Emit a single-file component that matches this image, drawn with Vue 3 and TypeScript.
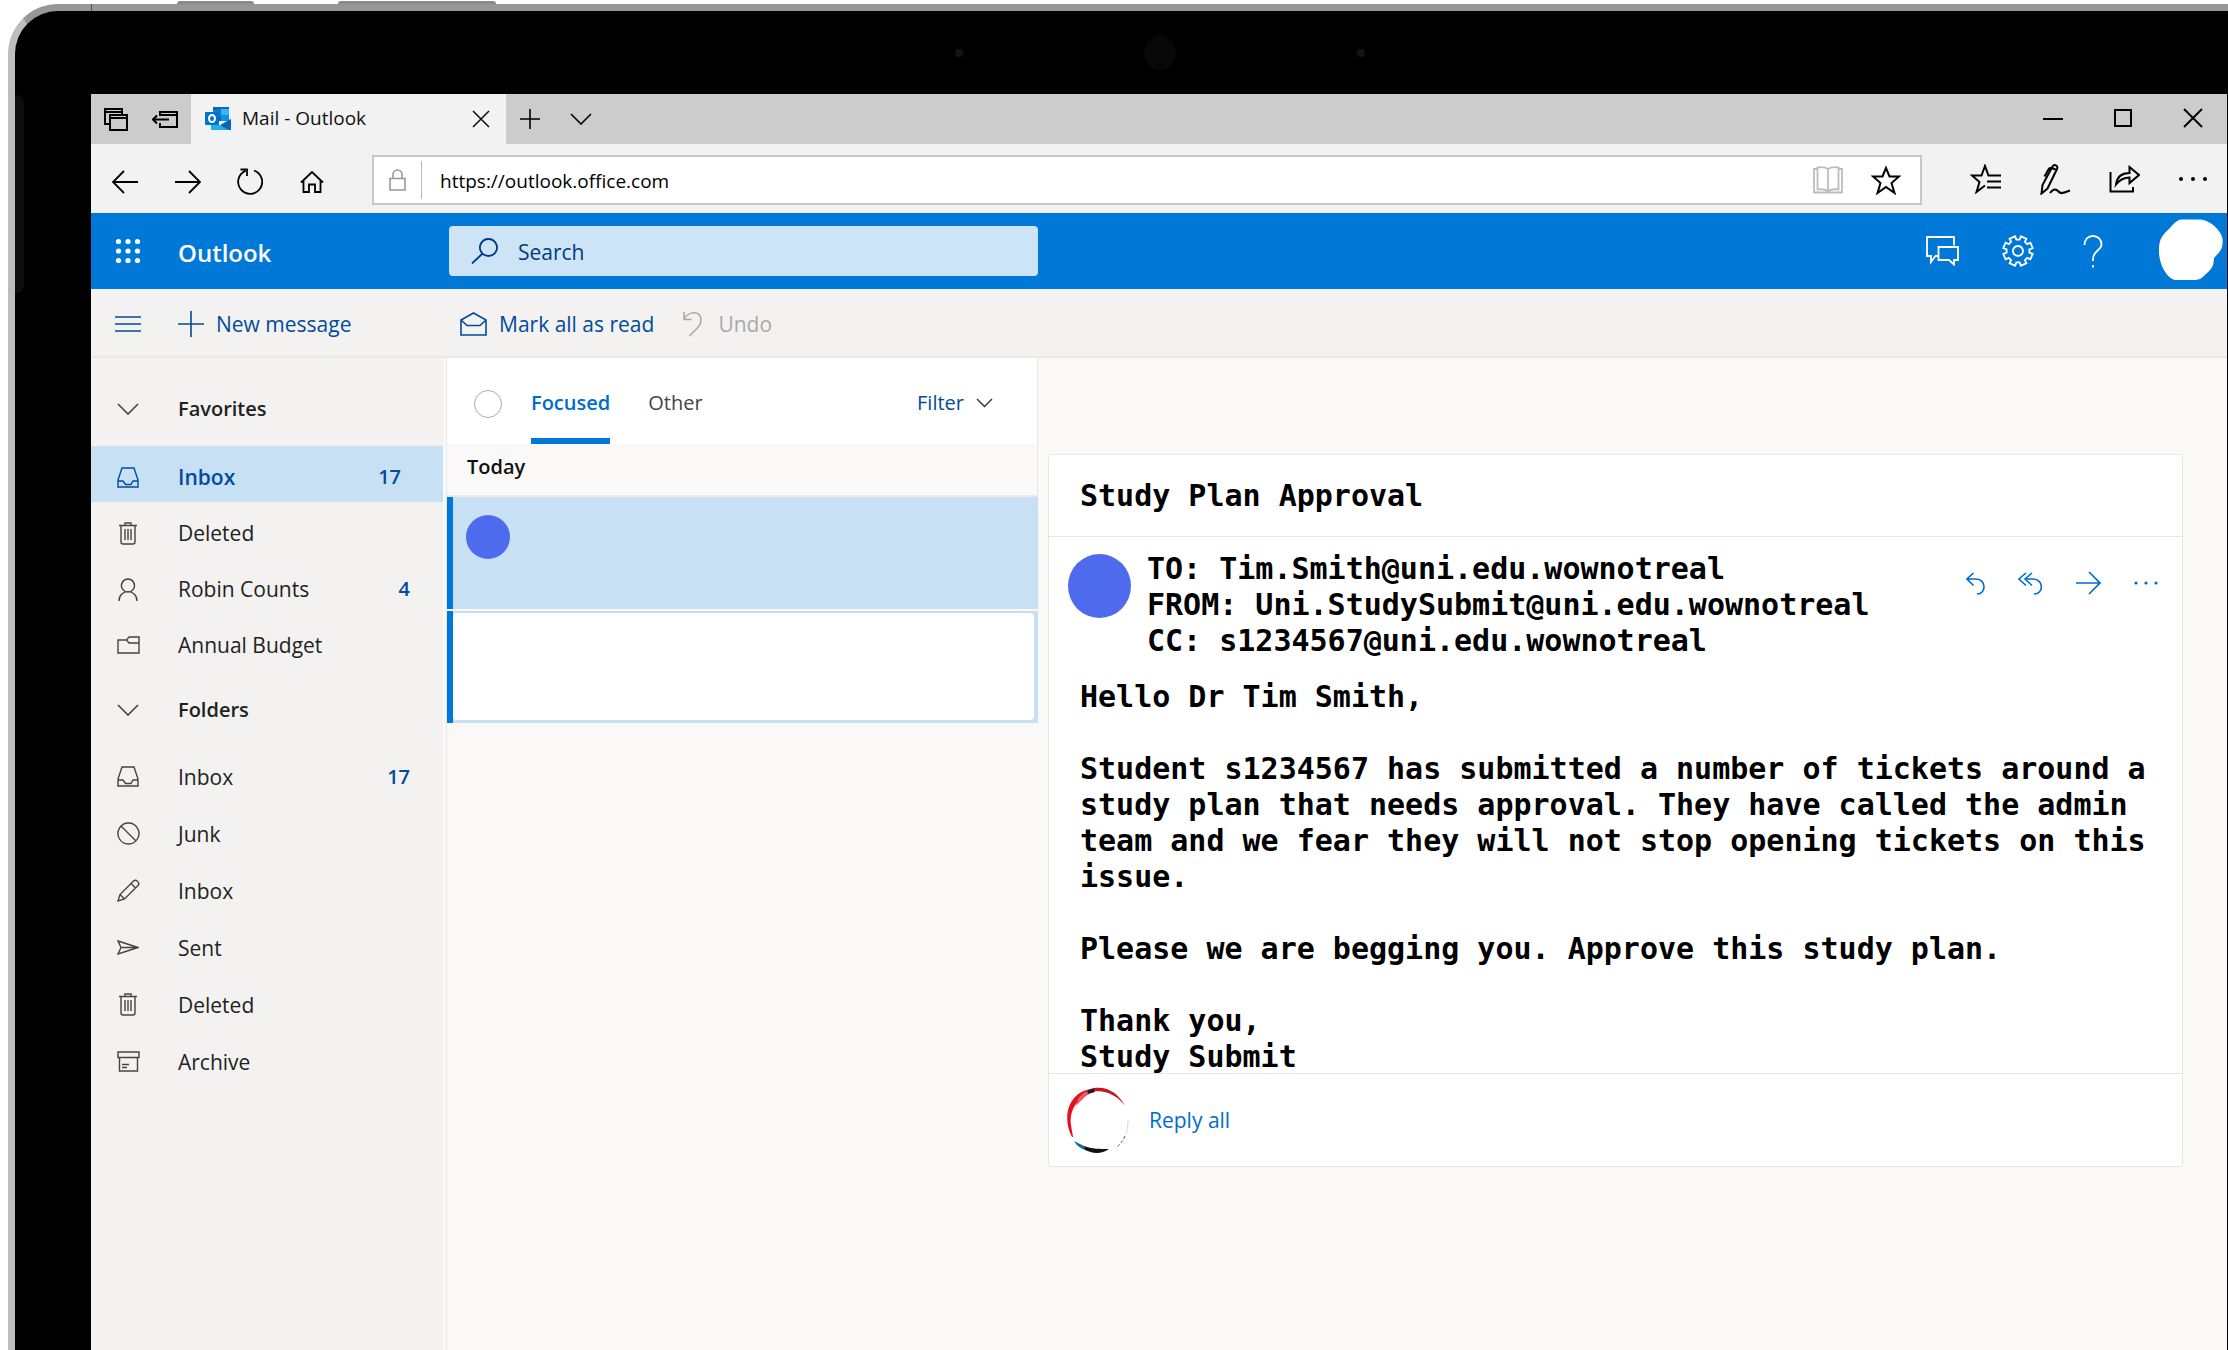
<script setup lang="ts">
import { h, ref } from 'vue'

interface Glyph { w: number; h: number; d: string; s?: number }

function gearPath(teeth: number, c: number, outer: number, inner: number): string {
  const pts: string[] = []
  for (let i = 0; i < teeth; i++) {
    const a = (i / teeth) * Math.PI * 2 + Math.PI / teeth
    const steps: [number, number][] = [[-0.25, inner], [-0.2, outer], [0.2, outer], [0.25, inner]]
    for (const [da, r] of steps) {
      pts.push(`${(c + Math.cos(a + da) * r).toFixed(1)} ${(c + Math.sin(a + da) * r).toFixed(1)}`)
    }
  }
  return `M${pts.join('L')}ZM${c} ${c - 5}a5 5 0 1 1 -.1 0Z`
}

const glyphs: Record<string, Glyph> = {
  tabs: { w: 24, h: 23, s: 2, d: 'M5 16H1V1H18V6M1 4H18M6 7H23V22H6ZM6 10H23' },
  aside: { w: 26, h: 17, s: 2, d: 'M8 5V1H25V16H8V12M8 4H25M1 8.500H17M5 4.500L1 8.500L5 12.500' },
  close: { w: 18, h: 18, s: 1.6, d: 'M1 1L17 17M17 1L1 17' },
  plus: { w: 20, h: 20, s: 1.6, d: 'M10 0V20M0 10H20' },
  chevron: { w: 22, h: 12, s: 1.6, d: 'M1 1L11 11L21 1' },
  chevronSmall: { w: 17, h: 10, s: 1.4, d: 'M1 1L8.500 8.500L16 1' },
  minimise: { w: 20, h: 20, s: 2, d: 'M0 11H20' },
  maximise: { w: 18, h: 18, s: 2, d: 'M1 1H17V17H1Z' },
  quit: { w: 20, h: 20, s: 2, d: 'M1 1L19 19M19 1L1 19' },
  back: { w: 26, h: 24, s: 1.8, d: 'M1 12H26M12 1L1 12L12 23' },
  forward: { w: 26, h: 24, s: 1.8, d: 'M0 12H25M14 1L25 12L14 23' },
  refresh: { w: 26, h: 27, s: 1.8, d: 'M17 2.500A12 12 0 1 1 8.500 2.800M3.500 1.500H10V8' },
  home: { w: 24, h: 22, s: 1.8, d: 'M1 11.500L12 1L23 11.500M3.500 9.500V21H9V13.500H15V21H20.500V9.500' },
  lock: { w: 17, h: 22, s: 1.6, d: 'M1 9.500H16V21H1ZM4 9.500V5.500A4.500 4.500 0 0 1 13 5.500V9.500' },
  book: { w: 30, h: 28, s: 1.8, d: 'M4.500 3H1V26.500H29V3H25.500M15 3C12 .8 8 1 4.500 1.500V23.500C8 23 12 23 15 25C18 23 22 23 25.500 23.500V1.500C22 1 18 .8 15 3V25' },
  star: { w: 30, h: 30, s: 2, d: 'M15 3L18.500 11.500H28L20.500 18L23.500 28L15 22L6.500 28L9.500 18L2 11.500H11.500Z' },
  favourites: { w: 31, h: 30, s: 2, d: 'M31 11.500H18.500L15 2L11.500 11.500H2L9.500 18L6.500 28L15 21.500M17 17.500H31M17 23.500H31' },
  ink: { w: 31, h: 32, s: 2, d: 'M1.500 30.500L2.500 22L12.500 3.500C14 .5 18.500 2.500 17 6L7.500 25.500ZM12 5L16.500 7M4.500 13.500L9 5.500L12 4.500M10 30C13 25.500 16 25.500 18.500 28.500C21.500 32 25 29 30 27.500' },
  share: { w: 31, h: 28, s: 2, d: 'M1.500 7V26.500H24V22M7 19.500C8 12 13 8 20.500 8V2L30 10L20.500 18V12.500C15 12.500 11 14.500 7 19.500Z' },
  chat: { w: 33, h: 30, s: 1.8, d: 'M12 20H9.500L5 26V20H1V1H28V9.500M12.500 11H32V24H28V28.500L23 24H12.500Z' },
  gear: { w: 32, h: 32, s: 1.8, d: gearPath(8, 16, 15, 11.500) },
  help: { w: 20, h: 33, s: 1.8, d: 'M1.500 10C1.500 4.500 5 1 10 1S18.500 4.500 18.500 9.500C18.500 15 10 16 10 24V26M10 30V32.500' },
  search: { w: 27, h: 26, s: 1.8, d: 'M17.500 1A8.500 8.500 0 1 1 17.400 1ZM11.500 15.500L1 25.500' },
  menu: { w: 26, h: 16, s: 1.4, d: 'M0 1H26M0 8H26M0 15H26' },
  add: { w: 26, h: 26, s: 1.6, d: 'M13 0V26M0 13H26' },
  envelope: { w: 27, h: 24, s: 1.6, d: 'M1 8L13.500 1L26 8V23H1ZM1 8L7 13.500H20L26 8' },
  undo: { w: 20, h: 26, s: 1.6, d: 'M1 1V8.500H8.500M1 8.500C4 1 18 -2 18 9C18 15 13 18 6.500 25' },
  inbox: { w: 22, h: 21, s: 1.4, d: 'M1 20V13L5 1H17L21 13V20ZM1 14H6L8.500 17.500H14L16 14H21' },
  trash: { w: 18, h: 23, s: 1.4, d: 'M0 3.500H18M6 3.500V1H12V3.500M2 3.500V20Q2 22 4 22H14Q16 22 16 20V3.500M6 7V18M9 7V18M12 7V18' },
  person: { w: 20, h: 23, s: 1.4, d: 'M10 1A6.500 6.500 0 1 1 9.900 1ZM1 23C1 10.500 19 10.500 19 23' },
  folder: { w: 23, h: 18, s: 1.4, d: 'M1 4H9.500L12 1H22V17H1ZM9.500 4L12 7H22' },
  junk: { w: 23, h: 23, s: 1.4, d: 'M11.500 1A10.500 10.500 0 1 1 11.400 1ZM4 4L19 19' },
  pencil: { w: 23, h: 23, s: 1.4, d: 'M1 22L3 15.500L16.500 2C19 -.5 23.500 4 21 6.500L7.500 20ZM14 4.500L18.500 9M3 15.500L7.500 20' },
  sent: { w: 22, h: 15, s: 1.4, d: 'M1 1L21 7.500L1 14L4 7.500ZM4 7.500H21' },
  archive: { w: 23, h: 21, s: 1.4, d: 'M1 1H22V6.500H1ZM2.500 6.500V20H20.500V6.500M5 13.500H12M5 16.500H10' },
  reply: { w: 19, h: 23, s: 1.6, d: 'M7.500 1L1 7L7.500 13.500M1 7H10C20.500 7 20.500 22 11 22' },
  replyAll: { w: 25, h: 23, s: 1.6, d: 'M8 1L1 7L8 13.500M14 1L7 7L14 13.500M7 7H15C26 7 26 22 16 22' },
  send: { w: 25, h: 24, s: 1.6, d: 'M0 12H24M13 1L24 12L13 23' },
}

const Icon = (props: { name: string }) => {
  const g = glyphs[props.name]
  return h('svg', {
    width: g.w, height: g.h, viewBox: `0 0 ${g.w} ${g.h}`, fill: 'none',
    stroke: 'currentColor', 'stroke-width': g.s ?? 1.5, 'aria-hidden': 'true',
  }, [h('path', { d: g.d })])
}
Icon.props = ['name']

const url = ref('https://outlook.office.com')
const query = ref('')

const favorites = [
  { icon: 'inbox', label: 'Inbox', count: 17, active: true },
  { icon: 'trash', label: 'Deleted' },
  { icon: 'person', label: 'Robin Counts', count: 4 },
  { icon: 'folder', label: 'Annual Budget' },
]
const folders = [
  { icon: 'inbox', label: 'Inbox', count: 17 },
  { icon: 'junk', label: 'Junk' },
  { icon: 'pencil', label: 'Inbox' },
  { icon: 'sent', label: 'Sent' },
  { icon: 'trash', label: 'Deleted' },
  { icon: 'archive', label: 'Archive' },
]
const recipients = [
  'TO: Tim.Smith@uni.edu.wownotreal',
  'FROM: Uni.StudySubmit@uni.edu.wownotreal',
  'CC: s1234567@uni.edu.wownotreal',
]
</script>

<template>
  <div class="stage">
    <div class="side-button power"></div>
    <div class="side-button volume"></div>
    <div class="device">
      <div class="seam"></div>
      <div class="grip"></div>
      <div class="bezel">
        <span class="sensor"></span><span class="lens"></span><span class="sensor"></span>
      </div>

      <div class="screen">
        <div class="tabstrip">
          <div class="tab-tools">
            <button aria-label="Tabs you've set aside"><Icon name="tabs" /></button>
            <button aria-label="Set these tabs aside"><Icon name="aside" /></button>
          </div>
          <div class="tab">
            <svg class="logo" width="26" height="24" viewBox="0 0 26 24" aria-hidden="true">
              <rect x="8" y="0" width="16" height="14" fill="#1066b5" />
              <rect x="8" y="3" width="8" height="7" fill="#0a7bd8" />
              <rect x="16" y="2" width="8" height="6" fill="#35b8f1" />
              <rect x="16" y="8" width="8" height="6" fill="#1490df" />
              <path d="M6 12L16 19L26 12V23H6Z" fill="#1a9ae8" />
              <path d="M26 12L15 18L24 23H26Z" fill="#0c62b3" />
              <path d="M6 14L22 23H6Z" fill="#22b0f0" />
              <rect x="0" y="5" width="14" height="13" rx="1" fill="#0072cf" />
              <ellipse cx="7" cy="11.500" rx="3" ry="3.500" fill="none" stroke="#fff" stroke-width="2" />
            </svg>
            <span class="tab-title">Mail - Outlook</span>
            <button aria-label="Close tab"><Icon name="close" /></button>
          </div>
          <div class="tab-extra">
            <button aria-label="New tab"><Icon name="plus" /></button>
            <button aria-label="Tab previews"><Icon name="chevron" /></button>
          </div>
          <div class="window-tools">
            <button aria-label="Minimise"><Icon name="minimise" /></button>
            <button aria-label="Maximise"><Icon name="maximise" /></button>
            <button aria-label="Close"><Icon name="quit" /></button>
          </div>
        </div>

        <div class="navbar">
          <div class="nav-left">
            <button aria-label="Back"><Icon name="back" /></button>
            <button aria-label="Forward"><Icon name="forward" /></button>
            <button aria-label="Refresh"><Icon name="refresh" /></button>
            <button aria-label="Home"><Icon name="home" /></button>
          </div>
          <div class="address">
            <span class="lock"><Icon name="lock" /></span>
            <input v-model="url" aria-label="Address" type="text" />
            <button class="muted" aria-label="Reading view"><Icon name="book" /></button>
            <button aria-label="Add to favourites"><Icon name="star" /></button>
          </div>
          <div class="nav-right">
            <button aria-label="Favourites"><Icon name="favourites" /></button>
            <button aria-label="Add notes"><Icon name="ink" /></button>
            <button aria-label="Share"><Icon name="share" /></button>
            <button aria-label="More">
              <svg width="28" height="4" viewBox="0 0 28 4"><circle cx="2" cy="2" r="2" /><circle cx="14" cy="2" r="2" /><circle cx="26" cy="2" r="2" /></svg>
            </button>
          </div>
        </div>

        <header class="appbar">
          <div class="brand">
            <button class="lead" aria-label="App launcher">
              <svg width="26" height="26" viewBox="0 0 26 26" fill="currentColor">
                <template v-for="r in 3" :key="r">
                  <circle v-for="c in 3" :key="c" :cx="c * 9.500 - 6" :cy="r * 9.500 - 6" r="2.600" />
                </template>
              </svg>
            </button>
            <a href="#">Outlook</a>
          </div>
          <label class="search">
            <Icon name="search" />
            <input v-model="query" type="text" placeholder="Search" aria-label="Search" />
          </label>
          <div class="app-tools">
            <button aria-label="Chat"><Icon name="chat" /></button>
            <button aria-label="Settings"><Icon name="gear" /></button>
            <button aria-label="Help"><Icon name="help" /></button>
            <button class="profile" aria-label="Account">
              <svg width="64" height="62" viewBox="0 0 64 62"><path fill="#fff" d="M22 .5H42C53 2 63 13 63.500 20C64.500 31 60 33 55 39C54.500 45 54 48 51 51C45 57 42 61 36 61H16C7 59 0 44 0 33C0 22 1 18 10 10C14 5 18 1 22 .5Z" /></svg>
            </button>
          </div>
        </header>

        <div class="toolbar">
          <div class="toolbar-left">
            <button class="lead" aria-label="Toggle folders"><Icon name="menu" /></button>
            <button class="new"><Icon name="add" />New message</button>
          </div>
          <button class="mark"><Icon name="envelope" />Mark all as read</button>
          <button class="undo" disabled><Icon name="undo" />Undo</button>
        </div>

        <div class="columns">
          <nav class="sidebar">
            <button class="group"><span class="lead"><Icon name="chevron" /></span>Favorites</button>
            <a v-for="f in favorites" :key="f.label" href="#" class="folder" :class="{ active: f.active }">
              <span class="lead"><Icon :name="f.icon" /></span>{{ f.label }}
              <span v-if="f.count" class="count">{{ f.count }}</span>
            </a>
            <button class="group second"><span class="lead"><Icon name="chevron" /></span>Folders</button>
            <a v-for="(f, i) in folders" :key="i" href="#" class="folder tall">
              <span class="lead"><Icon :name="f.icon" /></span>{{ f.label }}
              <span v-if="f.count" class="count">{{ f.count }}</span>
            </a>
          </nav>

          <section class="list">
            <div class="list-head">
              <input type="checkbox" aria-label="Select all messages" />
              <button class="pivot selected">Focused</button>
              <button class="pivot">Other</button>
              <button class="filter">Filter<Icon name="chevronSmall" /></button>
            </div>
            <h2>Today</h2>
            <a href="#" class="mail open" aria-label="Study Plan Approval"><span class="avatar"></span></a>
            <a href="#" class="mail blank" aria-label="Message"><span></span></a>
          </section>

          <main class="reading">
            <article class="card">
              <h1>Study Plan Approval</h1>
              <div class="message">
                <div class="meta">
                  <span class="avatar big"></span>
                  <div class="recipients">
                    <div v-for="r in recipients" :key="r">{{ r }}</div>
                  </div>
                  <div class="actions">
                    <button aria-label="Reply"><Icon name="reply" /></button>
                    <button aria-label="Reply all"><Icon name="replyAll" /></button>
                    <button aria-label="Forward"><Icon name="send" /></button>
                    <button aria-label="More actions">
                      <svg width="24" height="4" viewBox="0 0 24 4" fill="currentColor"><circle cx="2" cy="2" r="1.600" /><circle cx="12" cy="2" r="1.600" /><circle cx="22" cy="2" r="1.600" /></svg>
                    </button>
                  </div>
                </div>
                <div class="body">
                  <p>Hello Dr Tim Smith,</p>
                  <p>Student s1234567 has submitted a number of tickets around a study plan that needs approval. They have called the admin team and we fear they will not stop opening tickets on this issue.</p>
                  <p>Please we are begging you. Approve this study plan.</p>
                  <p>Thank you,<br />Study Submit</p>
                </div>
              </div>
              <div class="reply-bar">
                <svg width="64" height="66" viewBox="0 0 64 66" aria-hidden="true">
                  <path d="M6 50C-3 33 0 10 20 3L24 5C10 13 3 24 5 38L7 50Z" fill="#e3121c" />
                  <path d="M12 12C15 7 20 4 24 3L23 7C18 10 14 15 10 19Z" fill="#ea5a66" />
                  <path d="M21 3L28 1L29 5L22 7Z" fill="#3a1116" />
                  <path d="M28 1C42 -1 53 7 59 19C52 10 44 4 28 4Z" fill="#c4141c" />
                  <path d="M62 33C62 40 61 44 60 47" fill="none" stroke="#f6cdca" stroke-width="1" />
                  <path d="M59 49C57 54 55 56 50 61" fill="none" stroke="#555" stroke-width="1" stroke-dasharray="3 2" />
                  <path d="M8 54C11 59 15 62 20 63L18 59Z" fill="#0b6bb0" />
                  <path d="M18 59C26 62 34 62 43 62C35 68 25 66 19 63Z" fill="#111" />
                </svg>
                <button>Reply all</button>
              </div>
            </article>
          </main>
        </div>
      </div>
    </div>
  </div>
</template>

<style>
html, body { margin: 0; background: #fff; }
</style>

<style scoped>
* { box-sizing: border-box; }
.stage {
  position: relative;
  height: 100vh;
  min-height: 1200px;
  padding: 4px 0 0 8px;
  overflow: hidden;
  font-family: "Open Sans", "Noto Sans", sans-serif;
  font-size: 21px;
  line-height: 28px;
  color: #222;
}
button {
  display: flex;
  align-items: center;
  justify-content: center;
  padding: 0;
  border: 0;
  background: none;
  color: inherit;
  font: inherit;
}
a { color: inherit; text-decoration: none; }
input { border: 0; background: none; outline: 0; font: inherit; color: inherit; padding: 0; }
svg { display: block; flex: none; }

.side-button { position: absolute; top: 1px; height: 4px; background: #8a8a8a; border-radius: 3px 3px 0 0; }
.power { left: 177px; width: 77px; }
.volume { left: 338px; width: 158px; }
.device {
  position: relative;
  display: flex;
  flex-direction: column;
  height: 100%;
  border-left: 7px solid #bdbdbd;
  border-top: 7px solid #979797;
  border-top-left-radius: 50px;
  background: #000;
}
.seam { position: absolute; top: -7px; left: 76px; width: 1px; height: 7px; background: #555; }
.grip { position: absolute; top: 84px; left: 0; width: 9px; height: 198px; background: #0e0e0e; border-radius: 0 8px 8px 0; }
.bezel { display: flex; align-items: center; justify-content: center; gap: 181px; height: 83px; flex: none; padding-left: 77px; }
.sensor { width: 8px; height: 8px; border-radius: 50%; background: #141414; }
.lens { width: 32px; height: 34px; border-radius: 50%; background: #080808; }

.screen { flex: 1; display: flex; flex-direction: column; margin: 0 1px 0 76px; background: #faf9f8; }

.tabstrip { display: flex; height: 50px; flex: none; background: #ccc; color: #000; }
.tab-tools { display: flex; align-items: center; gap: 24px; width: 100px; padding-left: 13px; }
.tab { display: flex; align-items: center; width: 315px; padding: 0 16px 0 14px; background: #f2f2f2; font-size: 19px; color: #111; }
.tab-title { flex: 1; margin-left: 11px; padding-bottom: 2px; }
.tab-extra { display: flex; align-items: center; gap: 30px; padding-left: 14px; }
.window-tools { display: flex; align-items: center; gap: 51px; margin-left: auto; padding: 0 24px 2px 0; }

.navbar { display: flex; align-items: center; height: 69px; flex: none; background: #f2f2f2; color: #000; }
.nav-left { display: flex; align-items: center; justify-content: space-between; width: 212px; margin: 6px 48px 0 21px; }
.address { display: flex; align-items: center; flex: 1; height: 50px; margin-top: 2px; padding-right: 19px; gap: 28px; border: 2px solid #c8c8c8; background: #fff; }
.lock { display: flex; align-items: center; justify-content: center; width: 48px; height: 38px; border-right: 1px solid #bbb; color: #999; }
.address input { flex: 1; margin-left: -10px; padding-top: 2px; font-size: 19px; }
.muted { color: #bdbdbd; }
.nav-right { display: flex; align-items: center; justify-content: space-between; width: 237px; margin: 0 20px 0 48px; }

.appbar { display: flex; align-items: center; height: 76px; flex: none; background: #0078d7; color: #fff; }
.lead { display: flex; align-items: center; justify-content: center; width: 26px; margin: 0 37px 0 24px; }
.brand { display: flex; align-items: center; width: 358px; font-size: 24px; font-weight: 600; }
.brand a { padding-top: 4px; }
.search { display: flex; align-items: center; gap: 20px; flex: 0 1 589px; height: 50px; padding-left: 22px; border-radius: 4px; background: #cde4f7; color: #003a80; }
.search input { flex: 1; padding-top: 2px; }
.search input::placeholder { color: inherit; opacity: 1; }
.app-tools { display: flex; align-items: center; margin-left: auto; padding-right: 4px; }
.app-tools button + button { margin-left: 43px; }
.app-tools button:nth-child(3) { margin-left: 49px; }
.app-tools .profile { margin-left: 56px; padding-bottom: 3px; }

.toolbar { display: flex; align-items: center; height: 69px; flex: none; padding-top: 3px; border-bottom: 2px solid #eae9e8; background: #f3f2f1; color: #004b9b; }
.toolbar-left { display: flex; align-items: center; width: 369px; }
.new { gap: 12px; }
.mark { gap: 12px; }
.undo { gap: 15px; margin-left: 29px; color: #a9a9a9; }

.columns { display: flex; flex: 1; }
.sidebar { flex: none; width: 352px; margin-right: 3px; padding-top: 17px; background: #f3f2f1; }
.group { justify-content: flex-start; width: 100%; height: 71px; padding-bottom: 4px; font-size: 20px; font-weight: 600; }
.group.second { height: 56px; margin: 14px 0 5px; }
.folder { display: flex; align-items: center; height: 56px; padding: 6px 33px 0 0; }
.folder.tall { height: 57px; }
.folder .lead, .group .lead { color: #444; }
.folder.active { padding-right: 42px; background: #c7e0f4; color: #004b9b; font-weight: 600; }
.folder.active .lead { color: inherit; }
.count { margin-left: auto; font-size: 20px; font-weight: 600; color: #004b9b; }

.list { flex: none; width: 592px; border-left: 1px solid #e8e8e8; }
.list-head { display: flex; align-items: center; height: 86px; padding: 0 44px 0 27px; border-right: 1px solid #e8e8e8; background: #fff; font-size: 20px; }
.list-head input { appearance: none; width: 28px; height: 28px; margin: 5px 29px 0 0; border: 1px solid #aaa; border-radius: 50%; }
.pivot { height: 86px; margin-right: 38px; padding-top: 9px; border-top: 0 solid transparent; border-bottom: 6px solid transparent; color: #444; }
.pivot.selected { border-bottom-color: #0078d7; color: #006cd0; font-weight: 600; }
.filter { gap: 12px; margin-left: auto; padding-top: 3px; color: #004b9b; }
.filter svg { color: #333; }
h2 { margin: 0; height: 53px; padding: 9px 20px 0; border-right: 1px solid #e8e8e8; border-bottom: 2px solid #eae9e8; font-size: 20px; font-weight: 600; color: #111; }
.mail { display: block; height: 112px; border-left: 6px solid #0078d7; background: #c7e0f4; }
.open { padding: 18px 13px; }
.avatar { display: block; width: 44px; height: 44px; border-radius: 50%; background: #4f6bed; }
.blank { margin-top: 2px; padding: 2px 4px 3px 0; }
.blank span { display: block; height: 107px; border-radius: 4px; background: #fff; }

.reading { flex: 1; padding: 96px 44px 0 10px; }
.card { border: 1px solid #e6e6e6; border-radius: 3px; background: #fff; }
h1, .recipients, .body { margin: 0; font-family: "DejaVu Sans Mono", monospace; font-size: 30px; line-height: 36px; font-weight: 700; color: #000; }
h1 { padding: 23px 31px 22px; border-bottom: 1px solid #e6e6e6; }
.meta { display: flex; align-items: flex-start; padding: 14px 24px 0 19px; }
.avatar.big { flex: none; width: 63px; height: 64px; margin: 3px 16px 0 0; }
.actions { display: flex; align-items: center; gap: 33px; height: 64px; margin-left: auto; color: #006cd0; }
.body { padding: 20px 14px 0 31px; }
.body p { margin: 0 0 36px; }
.body p:last-child { margin: 0 0 -2px; }
.reply-bar { display: flex; align-items: center; gap: 19px; height: 93px; padding-left: 17px; border-top: 1px solid #e6e6e6; color: #006cd0; }
</style>
